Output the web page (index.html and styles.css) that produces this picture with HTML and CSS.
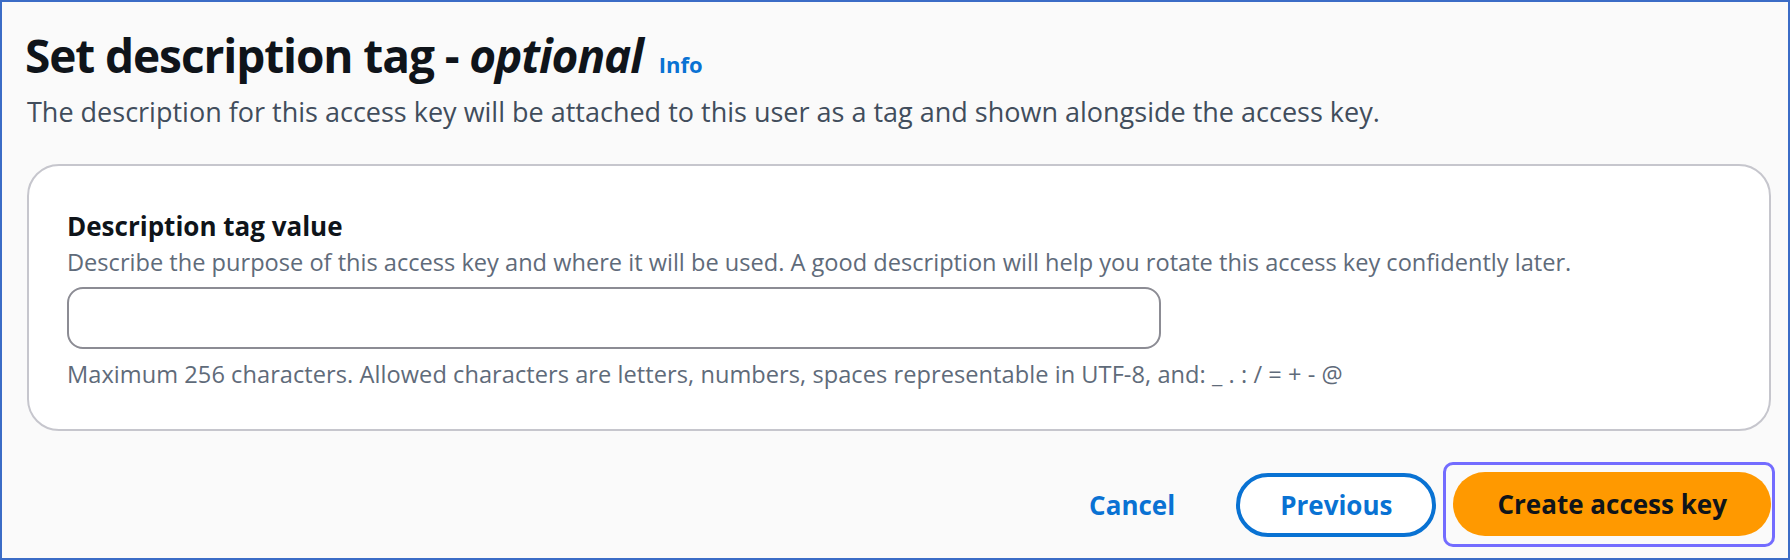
FILE: index.html
```html
<!DOCTYPE html>
<html lang="en">
<head>
    <meta charset="UTF-8">
    <meta name="viewport" content="width=device-width, initial-scale=1.0">
    <title>Set description tag</title>
    <link rel="stylesheet" href="styles.css">
</head>
<body>
    <div class="page">
        <header class="page-header">
            <h1 class="title">Set description tag - <em>optional</em> <a class="info-link" href="#">Info</a></h1>
            <p class="subtitle">The description for this access key will be attached to this user as a tag and shown alongside the access key.</p>
        </header>

        <section class="card">
            <label class="field-label" for="descTag">Description tag value</label>
            <div class="field-hint">Describe the purpose of this access key and where it will be used. A good description will help you rotate this access key confidently later.</div>
            <input class="field-input" id="descTag" type="text">
            <div class="field-hint field-constraint">Maximum 256 characters. Allowed characters are letters, numbers, spaces representable in UTF-8, and: _ . : / = + - @</div>
        </section>

        <div class="actions">
            <button class="btn btn-link">Cancel</button>
            <button class="btn btn-normal">Previous</button>
            <span class="focus-ring">
                <button class="btn btn-primary">Create access key</button>
            </span>
        </div>
    </div>
</body>
</html>
```

FILE: styles.css
```css
* {
    margin: 0;
    padding: 0;
    box-sizing: border-box;
}

body {
    font-family: "Open Sans", "Noto Sans", sans-serif;
    color: #0f141a;
    background: #fff;
}

.page {
    width: 1790px;
    height: 560px;
    border: 2px solid #3b6cc6;
    background: #fafafa;
    padding: 23px 17px 0 25px;
}

.title {
    margin-left: -2px;
    font-size: 46px;
    line-height: 60px;
    font-weight: 700;
    letter-spacing: -1.1px;
    color: #0f141a;
}

.title em {
    font-style: italic;
}

.info-link {
    margin-left: 5px;
    font-size: 22px;
    line-height: 1;
    font-weight: 700;
    letter-spacing: 0;
    color: #0972d3;
    text-decoration: none;
}

.subtitle {
    margin-top: 9px;
    font-size: 27px;
    line-height: 36px;
    color: #414d5c;
}

.card {
    margin-top: 34px;
    background: #fff;
    border: 2px solid #c6c6cd;
    border-radius: 32px;
    padding: 44px 40px 40px 38px;
}

.field-label {
    display: block;
    font-size: 26px;
    line-height: 32px;
    font-weight: 700;
    color: #0f141a;
}

.field-hint {
    margin-top: 5px;
    font-size: 23.6px;
    line-height: 30px;
    color: #5f6b7a;
}

.field-constraint {
    margin-top: 10px;
    letter-spacing: 0.05px;
}

.field-input {
    display: block;
    width: 1094px;
    height: 62px;
    margin-top: 10px;
    border: 2px solid #8c8c94;
    border-radius: 16px;
    background: #fff;
    font: inherit;
}

.actions {
    display: flex;
    justify-content: flex-end;
    align-items: center;
    margin-top: 31px;
    margin-right: -4px;
}

.btn {
    height: 64px;
    border-radius: 32px;
    font-family: inherit;
    font-size: 26px;
    font-weight: 700;
    cursor: pointer;
}

.btn-link {
    background: none;
    border: none;
    color: #0972d3;
    padding: 0 40px;
    margin-right: 21px;
}

.btn-normal {
    background: #fff;
    border: 4px solid #0972d3;
    color: #0972d3;
    padding: 0 40px;
    margin-right: 7px;
}

.focus-ring {
    display: inline-flex;
    border: 3px solid #736cff;
    border-radius: 10px;
    padding: 7px 1px 8px 7px;
}

.btn-primary {
    background: #ff9900;
    border: none;
    color: #0f141a;
    padding: 0 44px;
}
```
